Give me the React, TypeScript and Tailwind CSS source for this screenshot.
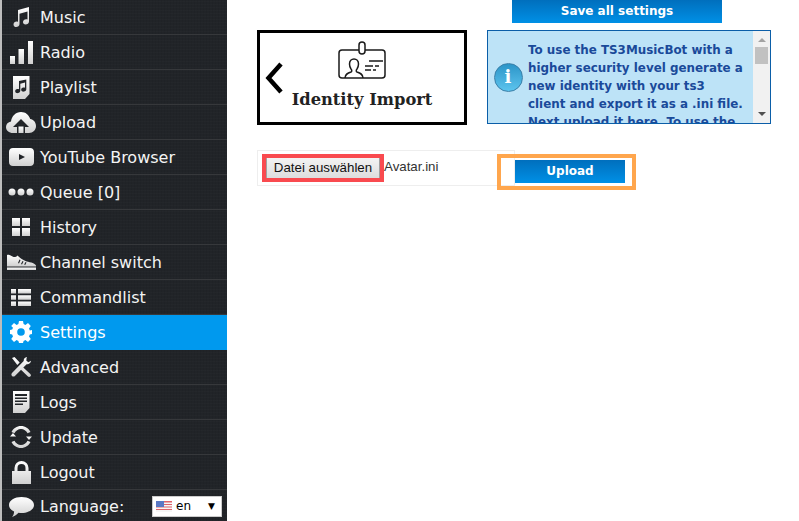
import type { ReactNode } from "react";

const Grad = () => (
  <defs>
    <linearGradient id="ig" x1="0" y1="0" x2="0" y2="1">
      <stop offset="0%" stopColor="#ffffff" />
      <stop offset="100%" stopColor="#d0d0d0" />
    </linearGradient>
  </defs>
);

function Ico({ w, h, ml, vb, children }: { w: number; h: number; ml: number; vb: string; children: ReactNode }) {
  return (
    <svg width={w} height={h} viewBox={vb} fill="url(#ig)" style={{ position: "absolute", left: ml - 2, top: (34 - h) / 2 }}>
      {children}
    </svg>
  );
}

const icons: Record<string, ReactNode> = {
  Music: (
    <Ico w={17} h={20} ml={13} vb="0 0 17 20">
      <path d="M5 3 16 0v14.500c0 1.800-1.700 3-3.400 3S10 16.500 10 15s1.500-2.800 3.200-2.800c.5 0 .9.100 1.300.3V4.500L6.500 6.700V17c0 1.700-1.600 3-3.300 3S.5 18.900.5 17.400 2 14.600 3.700 14.600c.5 0 .9.100 1.300.3z" />
    </Ico>
  ),
  Radio: (
    <Ico w={23} h={23} ml={10} vb="0 0 23 23">
      <rect x="0" y="15" width="5" height="8" />
      <rect x="8.500" y="8" width="5.500" height="15" />
      <rect x="18" y="0" width="5" height="23" />
    </Ico>
  ),
  Playlist: (
    <Ico w={18} h={23} ml={12} vb="0 0 18 23">
      <path fillRule="evenodd" d="M1 0h16.500v18L13 23H1zM7 5v8.300c-.5-.2-1-.3-1.600-.2C4 13.300 3 14.300 3.200 15.500s1.500 1.900 2.900 1.600c1.300-.2 2.200-1.200 2.200-2.300V7.800l4.700-1.200v5.200c-.5-.2-1-.3-1.600-.2-1.400.2-2.400 1.200-2.200 2.400s1.500 1.900 2.900 1.600c1.300-.2 2.200-1.200 2.200-2.300V3.600z" />
    </Ico>
  ),
  Upload: (
    <Ico w={30} h={21} ml={6} vb="0 0 30 21">
      <path d="M7 21C3 21 0 18.500 0 15c0-3 2.200-5 5-5.500C5.800 4 9.800 0 15 0c4.500 0 8 2.800 9.200 7 3.300.4 5.800 3.500 5.800 7 0 3.800-3 7-7 7h-4v-6h4l-8-8-8 8h4v6z" />
      <path d="M12.500 21v-6.500h5V21z" />
    </Ico>
  ),
  "YouTube Browser": (
    <Ico w={25} h={18} ml={9} vb="0 0 25 18">
      <path fillRule="evenodd" d="M4 0h17c2.500 0 4 1.500 4 4v10c0 2.500-1.500 4-4 4H4c-2.500 0-4-1.500-4-4V4c0-2.500 1.500-4 4-4zm6 6v6l6-3z" />
    </Ico>
  ),
  "Queue [0]": (
    <Ico w={26} h={8} ml={8} vb="0 0 26 8">
      <circle cx="4" cy="4" r="3.500" />
      <circle cx="13" cy="4" r="3.500" />
      <circle cx="22" cy="4" r="3.500" />
    </Ico>
  ),
  History: (
    <Ico w={18} h={18} ml={12} vb="0 0 18 18">
      <rect width="8" height="8" />
      <rect x="10" width="8" height="8" />
      <rect y="10" width="8" height="8" />
      <rect x="10" y="10" width="8" height="8" />
    </Ico>
  ),
  "Channel switch": (
    <Ico w={29} h={16} ml={6.500} vb="0 0 29 16">
      <path fillRule="evenodd" d="M0 1c2-1 4 1 6.500 2 1.500.3 3-.3 4-1.500 2 2 4.500 4 8 5.500 3 1.300 9 1.500 10.500 4.500v1H0zM12.500 5.500 11 9l1 .4L13.500 6zM15.500 7 14 10l1 .4 1.500-3zM18.500 8l-1.300 2.500 1 .4 1.300-2.500z" />
      <rect x="0" y="13.500" width="29" height="2.500" />
    </Ico>
  ),
  Commandlist: (
    <Ico w={20} h={17} ml={11} vb="0 0 20 17">
      <rect width="5" height="4.500" />
      <rect x="7" width="13" height="4.500" />
      <rect y="6.250" width="5" height="4.500" />
      <rect x="7" y="6.250" width="13" height="4.500" />
      <rect y="12.500" width="5" height="4.500" />
      <rect x="7" y="12.500" width="13" height="4.500" />
    </Ico>
  ),
  Settings: (
    <svg width="22" height="22" viewBox="0 0 22 22" fill="#fff" className="absolute left-[8px] top-[6px]">
      <path
        fillRule="evenodd"
        d="M9 0h4l.6 3.100 1.800.8L18 2.100 20.800 5 19 7.600l.8 1.800L22 9v4l-2.200.6-.8 1.800 1.800 2.600-2.800 2.900-2.600-1.800-1.800.8L13 22H9l-.6-2.100-1.800-.8L4 20.900 1.200 18 3 15.400l-.8-1.800L0 13V9l2.200-.4.800-1.800L1.200 5 4 2.100l2.600 1.800 1.800-.8zM11 7.200a3.800 3.800 0 1 0 0 7.600 3.800 3.800 0 0 0 0-7.600z"
      />
    </svg>
  ),
  Advanced: (
    <Ico w={20} h={20} ml={11} vb="0 0 20 20">
      <path d="M16 0c-2 .2-3.600 2-3.300 4L1 16c-.8.900-.8 2 0 2.900s2.100.9 2.900 0L15.600 7.300c2.200.400 4.200-1.300 4.400-3.500l-2.600 1.400-2-1.400L15.500 1.500z" />
      <path d="M1 1 3.500 0l5.200 5.500-2.400 2.400zM12 10.200l7.300 6.800c.9 1 .8 2-.1 2.600-.8.600-1.700.5-2.500-.3L9.700 12.500z" />
    </Ico>
  ),
  Logs: (
    <Ico w={18} h={22} ml={12} vb="0 0 18 22">
      <path fillRule="evenodd" d="M1 0h16.500v17L13 22H1zm2 3v2h12V3zm0 3.500v1.500h12V6.500zm0 3v1.500h12V9.500zm0 3v1.500h8v-1.500z" />
    </Ico>
  ),
  Update: (
    <Ico w={22} h={22} ml={10} vb="0 0 22 22">
      <path d="M11 0c4.200 0 7.800 2.400 9.500 6l-3 1.200C16.300 4.700 13.800 3 11 3 8.200 3 5.700 4.700 4.500 7.200l-3-1.200C3.200 2.400 6.800 0 11 0z" />
      <path d="M0 10.500h6L3 7zM22 10.500h-6l3 3.500zM11 22c-4.200 0-7.800-2.400-9.500-6l3-1.200C5.700 17.300 8.200 19 11 19s5.300-1.700 6.500-4.200l3 1.200c-1.700 3.600-5.300 6-9.500 6z" />
    </Ico>
  ),
  Logout: (
    <Ico w={19} h={23} ml={12} vb="0 0 19 23">
      <path fillRule="evenodd" d="M0 10h2.500V7a7 7 0 0 1 14 0v3H19v13H0zM5.500 10h8V7a4 4 0 0 0-8 0z" />
    </Ico>
  ),
  "Language:": (
    <Ico w={25} h={20} ml={9} vb="0 0 25 20">
      <path d="M12.500 0C19.400 0 25 3.500 25 8s-5.600 8-12.500 8c-1 0-2-.1-3-.2C8 17.500 5.500 19.500 3 20c1.200-1.300 2-3 2.100-5.500C2 13 0 10.700 0 8c0-4.500 5.600-8 12.500-8z" />
    </Ico>
  ),
};

const items = [
  "Music",
  "Radio",
  "Playlist",
  "Upload",
  "YouTube Browser",
  "Queue [0]",
  "History",
  "Channel switch",
  "Commandlist",
  "Settings",
  "Advanced",
  "Logs",
  "Update",
  "Logout",
];

function Flag() {
  return (
    <svg width="16" height="11" viewBox="0 0 16 11">
      <rect width="16" height="11" fill="#f6f6f6" />
      <path d="M0 0h16v1.500H0zM0 3h16v1H0zM0 5.500h16v1H0zM0 8h16v1H0z" fill="#e0626a" />
      <rect width="8" height="6" fill="#5a78c4" />
    </svg>
  );
}

export default function App() {
  return (
    <div className="flex h-[521px] w-[799px] overflow-hidden bg-white font-['DejaVu_Sans',sans-serif]">
      <svg width="0" height="0" className="absolute">
        <Grad />
      </svg>

      {/* sidebar */}
      <nav className="w-[227px] shrink-0 border-l-2 border-l-[#bdbdbd] bg-[#212428] bg-[repeating-linear-gradient(0deg,rgba(255,255,255,0.012)_0_1px,transparent_1px_3px),repeating-linear-gradient(90deg,rgba(0,0,0,0.05)_0_1px,transparent_1px_3px)]">
        {items.map((label) => (
          <div
            key={label}
            className={
              label === "Settings"
                ? "relative flex h-[35px] items-center bg-[#0099ee] pt-[1px] pl-[38px] text-base text-white"
                : "relative flex h-[35px] items-center border-b border-b-[#36383b] pt-[2px] pl-[38px] text-base text-[#f4f4f4]"
            }
          >
            {icons[label]}
            {label}
          </div>
        ))}
        <div className="relative flex h-[32px] items-center justify-between pt-[2px] pr-[5px] pl-[38px] text-base text-[#f4f4f4]">
          {icons["Language:"]}
          Language:
          <div className="-mt-[2px] flex h-[21px] w-[70px] items-center gap-[4px] border border-[#ccc] bg-white pl-[3px] text-xs text-black">
            <Flag />
            <span>en</span>
            <span className="mr-[6px] ml-auto text-[9px]">▼</span>
          </div>
        </div>
      </nav>

      {/* settings content */}
      <main className="flex-1 pl-[30px]">
        <div className="flex justify-end pr-[77px]">
          <button className="h-[23px] w-[210px] bg-gradient-to-b from-[#006fbd] to-[#0090e6] pb-[2px] text-xs font-bold text-white">
            Save all settings
          </button>
        </div>

        <div className="mt-[7px] flex gap-[20px]">
          <div className="relative flex h-[95px] w-[210px] flex-col items-center border-[3px] border-black pt-[8px]">
            <svg width="18" height="32" viewBox="0 0 18 32" fill="none" stroke="#000" strokeWidth="4.500" className="absolute left-[5px] top-[29px]">
              <path d="M16 2 3.500 16 16 30" />
            </svg>
            <svg width="48" height="38" viewBox="0 0 48 38" fill="none" stroke="#1a1a1a" strokeWidth="1.500">
              <rect x="1" y="9" width="46" height="28" rx="3" />
              <rect x="21" y="1" width="6" height="12" rx="3" fill="#fff" />
              <path d="M7 37c0-4 3-5 6-6 1-.5 1-2 0-3-1-1.500-1.500-3-1.500-5 0-3 2-5 4.500-5s4.500 2 4.500 5c0 2-.5 3.500-1.500 5-1 1-1 2.500 0 3 3 1 6 2 6 6" />
              <path d="M31 20h14M27 25h8M37 25h4M27 29h6M35 29h3" />
            </svg>
            <div className="mt-[11px] font-['DejaVu_Serif',serif] text-[16.300px] leading-5 font-bold text-[#222]">Identity Import</div>
          </div>

          <div className="flex h-[94px] w-[284px] border border-[#0b5ea8] bg-[#bde3f7]">
            <div className="flex w-[40px] shrink-0 items-center justify-center">
              <div className="flex h-[29px] w-[29px] items-center justify-center rounded-full border border-[#3a7fa8] bg-gradient-to-b from-[#2b95c8] to-[#5cc4ee] font-['DejaVu_Serif',serif] text-lg font-bold text-white">
                i
              </div>
            </div>
            <div className="flex-1 overflow-hidden pt-[10px] pr-[7px] text-[11.900px] leading-[18px] font-bold text-[#1a4a9a]">
              To use the TS3MusicBot with a higher security level generate a new identity with your ts3 client and export it as a .ini file. Next upload it here. To use the
            </div>
            <div className="flex w-[17px] shrink-0 flex-col items-center bg-[#f1f1f1] pt-[7px]">
              <div className="h-0 w-0 border-x-[4px] border-b-[4px] border-x-transparent border-b-[#a3a3a3]" />
              <div className="mt-[5px] h-[17px] w-[13px] bg-[#c1c1c1]" />
              <div className="mt-auto mb-[7px] h-0 w-0 border-x-[4px] border-t-[4px] border-x-transparent border-t-[#505050]" />
            </div>
          </div>
        </div>

        <div className="relative mt-[25px] flex h-[36px] w-[258px] items-center border border-[#eeeeee] pl-[8px]">
          <button className="mb-[1px] h-[24px] w-[114px] rounded-[2px] border border-[#a0a0a0] bg-gradient-to-b from-[#f4f4f4] to-[#dcdcdc] font-['Liberation_Sans',sans-serif] text-[13.300px] text-[#111]">
            Datei auswählen
          </button>
          <span className="mb-[2px] ml-[4px] font-['Liberation_Sans',sans-serif] text-[13.300px] text-[#333]">Avatar.ini</span>
          <div className="absolute top-[3px] left-[4px] h-[28px] w-[122px] border-[4px] border-[#f94a4f]" />
          <div className="absolute top-[3px] left-[239px] h-[36px] w-[139px] border-[4px] border-[#ffa64d] pt-[2px] pl-[14px]">
            <button className="block h-[23px] w-[110px] bg-gradient-to-b from-[#006fbd] to-[#0090e6] pb-[2px] text-xs font-bold text-white">Upload</button>
          </div>
        </div>
      </main>
    </div>
  );
}
